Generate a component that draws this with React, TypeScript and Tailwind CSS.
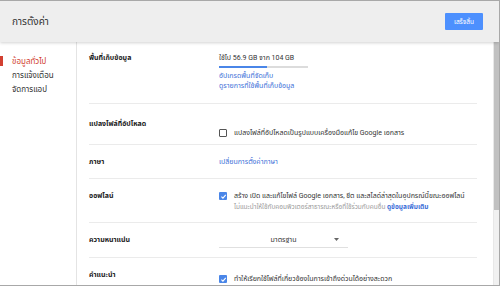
import React from "react";

const rows = "flex border-b border-[#ebebeb]";
const label = "w-[130px] shrink-0 font-bold text-[#222]";

function Check({ on }: { on?: boolean }) {
    if (on) {
        return (
            <span className="w-[8px] h-[8px] shrink-0 rounded-[1px] bg-[#4a86e8] flex items-center justify-center">
                <svg width="7" height="7" viewBox="0 0 10 10">
                    <path d="M2 5.2 L4.2 7.3 L8.2 2.8" stroke="#fff" strokeWidth="1.6" fill="none" />
                </svg>
            </span>
        );
    }
    return <span className="w-[8px] h-[8px] shrink-0 rounded-[1px] border border-[#555]" />;
}

export default function App() {
    return (
        <div className="w-[500px] h-[286px] overflow-hidden flex flex-col bg-white border-t border-b border-r border-[#a8a8a8] font-['Roboto','Noto_Sans_Thai',sans-serif] text-[7px] leading-[10px] text-[#333]">
            {/* header */}
            <div className="h-[41px] shrink-0 bg-[#eeeeee] flex items-center justify-between pl-3 pr-[16px] shadow-[0_1px_3px_rgba(0,0,0,0.18)] z-10">
                <span className="text-[10px] text-[#333]">การตั้งค่า</span>
                <button className="w-[38px] h-[17px] bg-[#4d90fe] text-white text-[6.5px] rounded-[1px]">เสร็จสิ้น</button>
            </div>

            <div className="flex flex-1 min-h-0">
                {/* sidebar */}
                <div className="w-[77px] shrink-0 border-r border-[#e4e4e4] pt-[13px] text-[8px]">
                    <div className="relative h-[14px] pl-3 flex items-center text-[#d23f31]">
                        <span className="absolute left-0 top-[1px] w-[3px] h-[10px] bg-[#d23f31]" />
                        ข้อมูลทั่วไป
                    </div>
                    <div className="h-[14px] pl-3 flex items-center text-[#333]">การแจ้งเตือน</div>
                    <div className="h-[14px] pl-3 flex items-center text-[#333]">จัดการแอป</div>
                </div>

                {/* settings */}
                <div className="flex-1 pl-3 pr-[16px]">
                    <div className={`${rows} h-[62px] pt-[11px]`}>
                        <div className={label}>พื้นที่เก็บข้อมูล</div>
                        <div className="flex flex-col">
                            <span>ใช้ไป 56.9 GB จาก 104 GB</span>
                            <div className="w-[89px] h-[2px] bg-[#dcdcdc] mt-[3px] mb-[3px]">
                                <div className="w-[48px] h-[2px] bg-[#4a86e8]" />
                            </div>
                            <span className="text-[#3d6fd8]">อัปเกรดพื้นที่จัดเก็บ</span>
                            <span className="text-[#3d6fd8]">ดูรายการที่ใช้พื้นที่เก็บข้อมูล</span>
                        </div>
                    </div>

                    <div className={`${rows} h-[41px] pt-[13px]`}>
                        <div className={`${label} pt-[2px]`}>แปลงไฟล์ที่อัปโหลด</div>
                        <div className="flex items-center gap-[7px] pt-[4px]">
                            <Check />
                            <span>แปลงไฟล์ที่อัปโหลดเป็นรูปแบบเครื่องมือแก้ไข Google เอกสาร</span>
                        </div>
                    </div>

                    <div className={`${rows} h-[34px] pt-[12px]`}>
                        <div className={label}>ภาษา</div>
                        <span className="text-[#3d6fd8]">เปลี่ยนการตั้งค่าภาษา</span>
                    </div>

                    <div className={`${rows} h-[44px] pt-[12px]`}>
                        <div className={label}>ออฟไลน์</div>
                        <div className="flex gap-[7px] whitespace-nowrap">
                            <div className="pt-[1px]"><Check on /></div>
                            <div className="flex flex-col gap-[1px]">
                                <span>สร้าง เปิด และแก้ไขไฟล์ Google เอกสาร, ชีต และสไลด์ล่าสุดในอุปกรณ์นี้ขณะออฟไลน์</span>
                                <span className="text-[6.5px] text-[#9a9a9a]">
                                    ไม่แนะนำให้ใช้กับคอมพิวเตอร์สาธารณะหรือที่ใช้ร่วมกับคนอื่น <span className="text-[#3d6fd8] font-bold">ดูข้อมูลเพิ่มเติม</span>
                                </span>
                            </div>
                        </div>
                    </div>

                    <div className={`${rows} h-[35px] pt-[12px]`}>
                        <div className={label}>ความหนาแน่น</div>
                        <div className="w-[129px] h-[13px] border-b border-[#e0e0e0] relative flex justify-center">
                            <span>มาตรฐาน</span>
                            <svg className="absolute right-[9px] top-[3px]" width="5" height="3" viewBox="0 0 5 3">
                                <path d="M0 0 L5 0 L2.5 3 Z" fill="#666" />
                            </svg>
                        </div>
                    </div>

                    <div className="flex pt-[12px]">
                        <div className={label}>คำแนะนำ</div>
                        <div className="flex items-center gap-[7px] pt-[4px]">
                            <Check on />
                            <span>ทำให้เรียกใช้ไฟล์ที่เกี่ยวข้องในการเข้าถึงด่วนได้อย่างสะดวก</span>
                        </div>
                    </div>
                </div>

                {/* scrollbar */}
                <div className="w-[6px] shrink-0 bg-[#f1f1f1] border-l border-[#e8e8e8] flex flex-col">
                    <div className="h-[168px] bg-[#c1c1c1]" />
                </div>
            </div>
        </div>
    );
}
